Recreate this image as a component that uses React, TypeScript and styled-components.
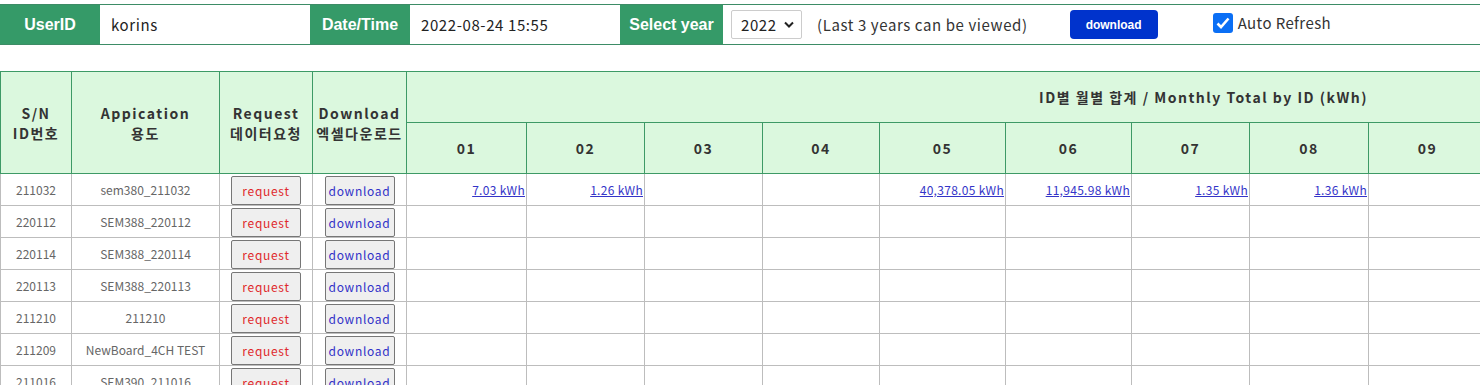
import React, { useState } from "react";
import styled, { createGlobalStyle } from "styled-components";

const GlobalStyle = createGlobalStyle`
  body {
    margin: 0;
    padding-top: 4px;
    background: #fff;
    overflow: hidden;
    font-family: "Noto Sans CJK KR", "Noto Sans", sans-serif;
  }
`;

const TopBar = styled.div`
  display: flex;
  align-items: center;
  height: 39px;
  border-top: 1px solid #3d8c66;
  border-bottom: 1px solid #3d8c66;
  width: 1480px;
`;

const Label = styled.div<{ $w: number }>`
  width: ${p => p.$w}px;
  height: 100%;
  background: #359a68;
  color: #fff;
  font-family: "Liberation Sans", Arial, sans-serif;
  font-weight: bold;
  font-size: 16px;
  display: flex;
  align-items: center;
  justify-content: center;
`;

const Field = styled.div<{ $w: number }>`
  width: ${p => p.$w}px;
  height: 100%;
  display: flex;
  align-items: center;
  padding-left: 11px;
  box-sizing: border-box;
  font-size: 15px;
  letter-spacing: 0.6px;
  color: #222;
`;

const YearSelect = styled.div`
  margin-left: 8px;
  width: 71px;
  height: 29px;
  box-sizing: border-box;
  border: 1px solid #ccc;
  border-radius: 2px;
  display: flex;
  align-items: center;
  justify-content: space-between;
  padding: 0 7px 0 9px;
  font-size: 15px;
  letter-spacing: 0.6px;
  color: #222;
`;

const Note = styled.span`
  margin-left: 15px;
  font-size: 15px;
  letter-spacing: 0.6px;
  color: #333;
`;

const BlueButton = styled.button`
  margin-left: 42px;
  width: 88px;
  height: 29px;
  border: none;
  border-radius: 4px;
  background: #0033cc;
  color: #fff;
  font-family: "Liberation Sans", Arial, sans-serif;
  font-weight: bold;
  font-size: 12px;
`;

const CheckLabel = styled.label`
  margin-left: 55px;
  display: flex;
  align-items: center;
  gap: 5px;
  font-size: 15px;
  letter-spacing: 0.4px;
  color: #333;
  align-self: flex-start;
  margin-top: 7px;
`;

const CheckBox = styled.span`
  width: 20px;
  height: 20px;
  border-radius: 3px;
  background: #0b6ff5;
  display: flex;
  align-items: center;
  justify-content: center;
`;

const Table = styled.table`
  margin-top: 26px;
  border-collapse: collapse;
  table-layout: fixed;
  width: 2000px;
`;

const Th = styled.th`
  background: #dbf8de;
  border: 1px solid #3d9a66;
  color: #333;
  font-size: 14px;
  font-weight: bold;
  letter-spacing: 1.5px;
  line-height: 20px;
  padding: 0;
  height: 50px;
  text-align: center;
`;

const Td = styled.td<{ $align?: string }>`
  border: 1px solid #bdbdbd;
  height: 31px;
  padding: 0 1px;
  font-size: 12px;
  color: #666;
  text-align: ${p => p.$align || "center"};
  white-space: nowrap;
`;

const CellButton = styled.button<{ $color: string }>`
  width: 70px;
  height: 29px;
  margin-top: 1px;
  background: #efefef;
  border: 1px solid #767676;
  border-radius: 2px;
  color: ${p => p.$color};
  font-family: "Noto Sans CJK KR", "Noto Sans", sans-serif;
  font-size: 12px;
  letter-spacing: 0.7px;
  padding: 0;
`;

const Value = styled.a`
  color: #3434c8;
  text-decoration: underline;
  font-size: 12px;
  letter-spacing: 0.3px;
`;

const widths = [71, 148, 93, 94, 120, 118, 118, 117, 126, 126, 118, 119, 118, 171, 171, 172];
const months = ["01", "02", "03", "04", "05", "06", "07", "08", "09", "10", "11", "12"];

const rows = [
  { sn: "211032", app: "sem380_211032", vals: ["7.03 kWh", "1.26 kWh", "", "", "40,378.05 kWh", "11,945.98 kWh", "1.35 kWh", "1.36 kWh"] },
  { sn: "220112", app: "SEM388_220112", vals: [] },
  { sn: "220114", app: "SEM388_220114", vals: [] },
  { sn: "220113", app: "SEM388_220113", vals: [] },
  { sn: "211210", app: "211210", vals: [] },
  { sn: "211209", app: "NewBoard_4CH TEST", vals: [] },
  { sn: "211016", app: "SEM390_211016", vals: [] },
];

const App = () => {
  const [auto] = useState(true);

  return (
    <>
      <GlobalStyle />
      <TopBar>
        <Label $w={100}>UserID</Label>
        <Field $w={210}>korins</Field>
        <Label $w={100}>Date/Time</Label>
        <Field $w={210}>2022-08-24 15:55</Field>
        <Label $w={103}>Select year</Label>
        <YearSelect>
          2022
          <svg width="10" height="7" viewBox="0 0 10 7">
            <path d="M1 1.5l4 4 4-4" stroke="#222" strokeWidth="2" fill="none" />
          </svg>
        </YearSelect>
        <Note>(Last 3 years can be viewed)</Note>
        <BlueButton>download</BlueButton>
        <CheckLabel>
          <CheckBox>
            {auto && (
              <svg width="14" height="12" viewBox="0 0 14 12">
                <path d="M1.5 6.5l3.5 3.5 7.5-8.5" stroke="#fff" strokeWidth="2.6" fill="none" />
              </svg>
            )}
          </CheckBox>
          Auto Refresh
        </CheckLabel>
      </TopBar>

      <Table>
        <colgroup>
          {widths.map((w, i) => <col key={i} style={{ width: w }} />)}
        </colgroup>
        <thead>
          <tr>
            <Th rowSpan={2}>S/N<br />ID번호</Th>
            <Th rowSpan={2}>Appication<br />용도</Th>
            <Th rowSpan={2}>Request<br />데이터요청</Th>
            <Th rowSpan={2}>Download<br />엑셀다운로드</Th>
            <Th colSpan={12}>ID별 월별 합계 / Monthly Total by ID (kWh)</Th>
          </tr>
          <tr>
            {months.map(m => <Th key={m}>{m}</Th>)}
          </tr>
        </thead>
        <tbody>
          {rows.map(r => (
            <tr key={r.sn}>
              <Td>{r.sn}</Td>
              <Td>{r.app}</Td>
              <Td><CellButton $color="#e0282c">request</CellButton></Td>
              <Td><CellButton $color="#3232c8">download</CellButton></Td>
              {months.map((m, i) => (
                <Td key={m} $align="right">
                  {r.vals[i] ? <Value href="#">{r.vals[i]}</Value> : null}
                </Td>
              ))}
            </tr>
          ))}
        </tbody>
      </Table>
    </>
  );
};

export default App;
